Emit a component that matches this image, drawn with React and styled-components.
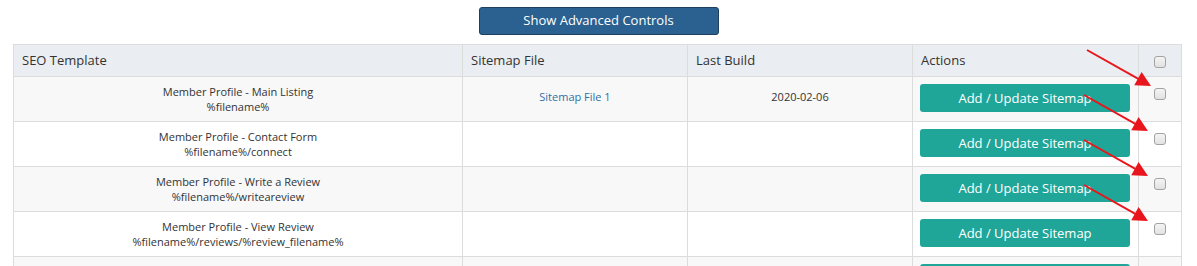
import React from "react";
import styled, { createGlobalStyle } from "styled-components";

const GlobalStyle = createGlobalStyle`
  html, body { margin: 0; padding: 0; background: #fff; }
  body { font-family: "Open Sans", "Liberation Sans", sans-serif; color: #333; }
  * { box-sizing: border-box; }
`;

const Page = styled.div`
  position: relative;
  width: 1197px;
  height: 266px;
  overflow: hidden;
  padding: 7px 15px 0 13px;
`;

const TopBar = styled.div`
  display: flex;
  justify-content: center;
  padding-left: 2px;
  margin-bottom: 9px;
`;

const AdvancedButton = styled.button`
  width: 240px;
  height: 28px;
  background: #2a6190;
  border: 1px solid #1f3f5c;
  border-radius: 3px;
  color: #fff;
  font-family: "Open Sans", "Liberation Sans", sans-serif;
  font-size: 13px;
  line-height: 1;
  padding: 0 0 1px;
  cursor: pointer;
`;

const Table = styled.table`
  width: 1169px;
  border-collapse: collapse;
  table-layout: fixed;
  border: 1px solid #dcdcdc;
`;

const HeadCell = styled.th`
  width: ${(p) => p.$w}px;
  height: 32px;
  background: #eaedf1;
  border: 1px solid #dcdcdc;
  padding: 0 8px 1px;
  font-size: 13px;
  font-weight: normal;
  text-align: left;
  color: #333;
  vertical-align: middle;
`;

const Row = styled.tr`
  background: ${(p) => (p.$odd ? "#f8f8f8" : "#fff")};
`;

const Cell = styled.td`
  height: 45px;
  border: 1px solid #dcdcdc;
  padding: ${(p) => p.$pt ?? 7}px 8px 0;
  vertical-align: top;
  text-align: center;
  font-size: 11px;
  line-height: 15px;
  color: #333;
`;

const ActionCell = styled.td`
  height: 45px;
  border: 1px solid #dcdcdc;
  padding: 7px 7px 0 7px;
  vertical-align: top;
`;

const Line = styled.div`
  white-space: nowrap;
`;

const FileLink = styled.a`
  color: #2f70a8;
  text-decoration: none;
`;

const UpdateButton = styled.button`
  display: block;
  width: 210px;
  height: 28px;
  background: #1fa699;
  border: none;
  border-radius: 3px;
  color: #fff;
  font-family: "Open Sans", "Liberation Sans", sans-serif;
  font-size: 13px;
  padding: 0 0 1px;
  cursor: pointer;
`;

const CheckCell = styled.td`
  height: 45px;
  border: 1px solid #dcdcdc;
  padding: 11px 0 0 15px;
  vertical-align: top;
`;

const Check = styled.input.attrs({ type: "checkbox" })`
  appearance: none;
  -webkit-appearance: none;
  display: block;
  margin: ${(p) => (p.$head ? "2px 0 0 0" : "0")};
  width: 12px;
  height: 12px;
  border: 1px solid #a3a3a3;
  border-radius: 3px;
  background: linear-gradient(#f4f4f4, #e2e2e2);
`;

const HeadCheckCell = styled.th`
  background: #eaedf1;
  border: 1px solid #dcdcdc;
  padding: 0 0 0 15px;
  vertical-align: middle;
`;

const Overlay = styled.svg`
  position: absolute;
  left: 0;
  top: 0;
  pointer-events: none;
`;

const rows = [
  { title: "Member Profile - Main Listing", path: "%filename%", file: "Sitemap File 1", date: "2020-02-06", label: "Add / Update Sitemap", check: true },
  { title: "Member Profile - Contact Form", path: "%filename%/connect", label: "Add / Update Sitemap", check: true },
  { title: "Member Profile - Write a Review", path: "%filename%/writeareview", label: "Add / Update Sitemap", check: true },
  { title: "Member Profile - View Review", path: "%filename%/reviews/%review_filename%", label: "Add / Update Sitemap", check: true },
  { title: "", path: "", label: "", check: false },
];

const arrows = [
  [1087, 50, 1151, 86],
  [1084, 95, 1148, 131],
  [1084, 140, 1148, 176],
  [1084, 185, 1148, 221],
];

function Arrow({ x1, y1, x2, y2 }) {
  const dx = x2 - x1;
  const dy = y2 - y1;
  const len = Math.hypot(dx, dy);
  const ux = dx / len;
  const uy = dy / len;
  const hl = 15;
  const hw = 7.5;
  const bx = x2 - ux * hl;
  const by = y2 - uy * hl;
  const p1 = `${bx - uy * hw},${by + ux * hw}`;
  const p2 = `${bx + uy * hw},${by - ux * hw}`;
  return (
    <g>
      <line x1={x1} y1={y1} x2={bx + ux * 2} y2={by + uy * 2} stroke="#e8161c" strokeWidth="2" />
      <polygon points={`${x2},${y2} ${p1} ${p2}`} fill="#e8161c" />
    </g>
  );
}

export default function App() {
  return (
    <>
      <GlobalStyle />
      <Page>
        <TopBar>
          <AdvancedButton>Show Advanced Controls</AdvancedButton>
        </TopBar>
        <Table>
          <thead>
            <tr>
              <HeadCell $w={449}>SEO Template</HeadCell>
              <HeadCell $w={225}>Sitemap File</HeadCell>
              <HeadCell $w={225}>Last Build</HeadCell>
              <HeadCell $w={226}>Actions</HeadCell>
              <HeadCheckCell>
                <Check $head />
              </HeadCheckCell>
            </tr>
          </thead>
          <tbody>
            {rows.map((r, i) => (
              <Row key={i} $odd={i % 2 === 0}>
                <Cell>
                  <Line>{r.title}</Line>
                  <Line>{r.path}</Line>
                </Cell>
                <Cell $pt={12}>
                  {r.file && <FileLink href="#">{r.file}</FileLink>}
                </Cell>
                <Cell $pt={12}>{r.date}</Cell>
                <ActionCell>
                  <UpdateButton aria-label="Add / Update Sitemap">{r.label}</UpdateButton>
                </ActionCell>
                <CheckCell>{r.check && <Check />}</CheckCell>
              </Row>
            ))}
          </tbody>
        </Table>
        <Overlay width="1197" height="266" viewBox="0 0 1197 266">
          {arrows.map(([a, b, c, d], i) => (
            <Arrow key={i} x1={a} y1={b} x2={c} y2={d} />
          ))}
        </Overlay>
      </Page>
    </>
  );
}
